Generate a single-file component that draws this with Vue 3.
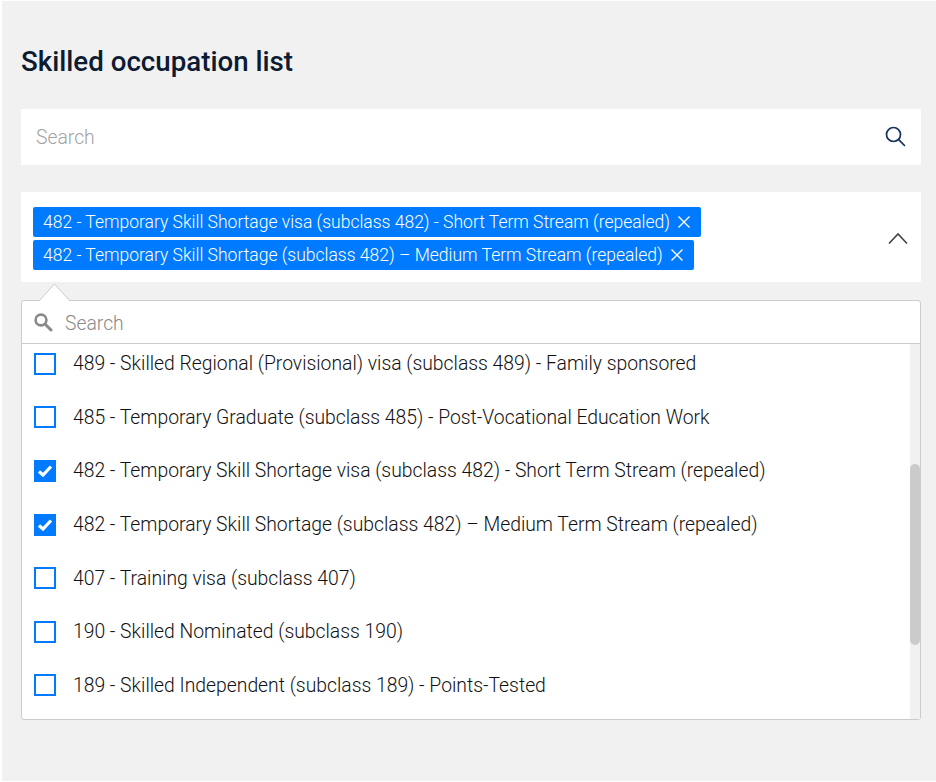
<template>
  <main class="page">
    <h1 class="title">Skilled occupation list</h1>
    <div class="search">
      <span class="placeholder">Search</span>
      <svg class="search-icon" width="22" height="22" viewBox="0 0 22 22" fill="none" stroke="#14305c" stroke-width="1.7">
        <circle cx="9.5" cy="9.5" r="7" />
        <path d="M14.6 14.6 L20.5 20.5" stroke-linecap="round" />
      </svg>
    </div>
    <div class="picker">
      <div class="chips">
        <span v-for="c in chips" :key="c" class="chip">
          {{ c }}
          <svg width="14" height="14" viewBox="0 0 14 14" stroke="#fff" stroke-width="1.4" fill="none">
            <path d="M1.5 1.5 L12.5 12.5 M12.5 1.5 L1.5 12.5" />
          </svg>
        </span>
      </div>
      <svg class="chevron" width="20" height="12" viewBox="0 0 20 12" fill="none" stroke="#444" stroke-width="1.6">
        <path d="M1 11.5 L10 2 L19 11.5" />
      </svg>
    </div>
    <div class="dropdown">
      <svg class="arrow" width="32" height="19" viewBox="0 0 32 19">
        <path d="M0 18.5 L15.5 1 L31 18.5 Z" fill="#fff" />
        <path d="M0 18 L15.5 1 L31 18" fill="none" stroke="#ccc" />
      </svg>
      <div class="filter">
        <svg width="20" height="20" viewBox="0 0 20 20" fill="none" stroke="#8a8a8a" stroke-width="2.6">
          <circle cx="8" cy="8" r="5.4" />
          <path d="M12 12 L18 18" stroke-linecap="round" stroke-width="3" />
        </svg>
        <span class="filter-text">Search</span>
      </div>
      <div class="list">
        <div class="rows">
          <div v-for="o in options" :key="o.label" class="row">
            <span class="box" :class="{ checked: o.checked }">
              <svg v-if="o.checked" width="16" height="14" viewBox="0 0 16 14" fill="none" stroke="#fff" stroke-width="3.2">
                <path d="M2 7.5 L6 11 L14 2.5" />
              </svg>
            </span>
            <span>{{ o.label }}</span>
          </div>
        </div>
        <div class="track"><div class="thumb"></div></div>
      </div>
    </div>
  </main>
</template>

<script setup>
const chips = [
  '482 - Temporary Skill Shortage visa (subclass 482) - Short Term Stream (repealed)',
  '482 - Temporary Skill Shortage (subclass 482) – Medium Term Stream (repealed)'
]
const options = [
  { label: '489 - Skilled Regional (Provisional) visa (subclass 489) - Family sponsored' },
  { label: '485 - Temporary Graduate (subclass 485) - Post-Vocational Education Work' },
  { label: chips[0], checked: true },
  { label: chips[1], checked: true },
  { label: '407 - Training visa (subclass 407)' },
  { label: '190 - Skilled Nominated (subclass 190)' },
  { label: '189 - Skilled Independent (subclass 189) - Points-Tested' }
]
</script>

<style>
html, body { background: #fff; }
</style>

<style scoped>
.page {
  box-sizing: border-box;
  height: 780px;
  margin: 1px 0 1px 2px;
  padding: 0 15px 0 19px;
  background: #f1f1f1;
  font-family: Roboto, "Liberation Sans", sans-serif;
  font-weight: 300;
  font-size: 19.33px;
  overflow: hidden;
}
.title {
  margin: 0;
  padding-top: 43px;
  height: 65px;
  line-height: 35px;
  box-sizing: content-box;
  font-size: 27.7px;
  font-weight: 500;
  color: #0d1b33;
}
.search {
  height: 56px;
  background: #fff;
  display: flex;
  align-items: center;
  justify-content: space-between;
  padding: 0 15px;
}
.placeholder { color: #a3a3a3; }
.search-icon { margin-top: -2px; }
.picker {
  margin-top: 27px;
  height: 90px;
  box-sizing: border-box;
  padding: 2px 13px 0 12px;
  background: #fff;
  display: flex;
  align-items: center;
  justify-content: space-between;
}
.chips {
  display: flex;
  flex-direction: column;
  align-items: flex-start;
  gap: 3px;
}
.chip {
  height: 30px;
  box-sizing: border-box;
  padding: 0 10px;
  display: flex;
  align-items: center;
  gap: 7px;
  background: #007bff;
  color: #fff;
  border-radius: 2px;
  white-space: nowrap;
  font-size: 17.5px;
}
.chevron { margin-top: 0; }
.dropdown {
  position: relative;
  margin-top: 18px;
  height: 420px;
  box-sizing: border-box;
  background: #fff;
  border: 1px solid #ccc;
  border-radius: 3px;
  display: flex;
  flex-direction: column;
}
.arrow {
  position: absolute;
  left: 17px;
  top: -18px;
}
.filter {
  height: 42px;
  flex: none;
  display: flex;
  align-items: center;
  gap: 12px;
  padding-left: 11px;
  border-bottom: 1px solid #ccc;
  position: relative;
}
.filter-text { color: #8a8a8a; margin-top: 2px; }
.list {
  position: relative;
  flex: 1;
  overflow: hidden;
}
.rows { margin-top: -7.3px; }
.row {
  height: 53.67px;
  display: flex;
  align-items: center;
  gap: 17px;
  padding-left: 12px;
  color: #111;
  white-space: nowrap;
}
.box {
  width: 22px;
  height: 22px;
  box-sizing: border-box;
  border: 2px solid #007bff;
  display: flex;
  align-items: center;
  justify-content: center;
  flex: none;
}
.box.checked { background: #007bff; }
.track {
  position: absolute;
  top: 0;
  right: 0;
  bottom: 0;
  width: 10px;
  background: #f1f1f1;
}
.thumb {
  margin-top: 120px;
  height: 181px;
  border-radius: 5px;
  background: #cbcbcb;
}
</style>
